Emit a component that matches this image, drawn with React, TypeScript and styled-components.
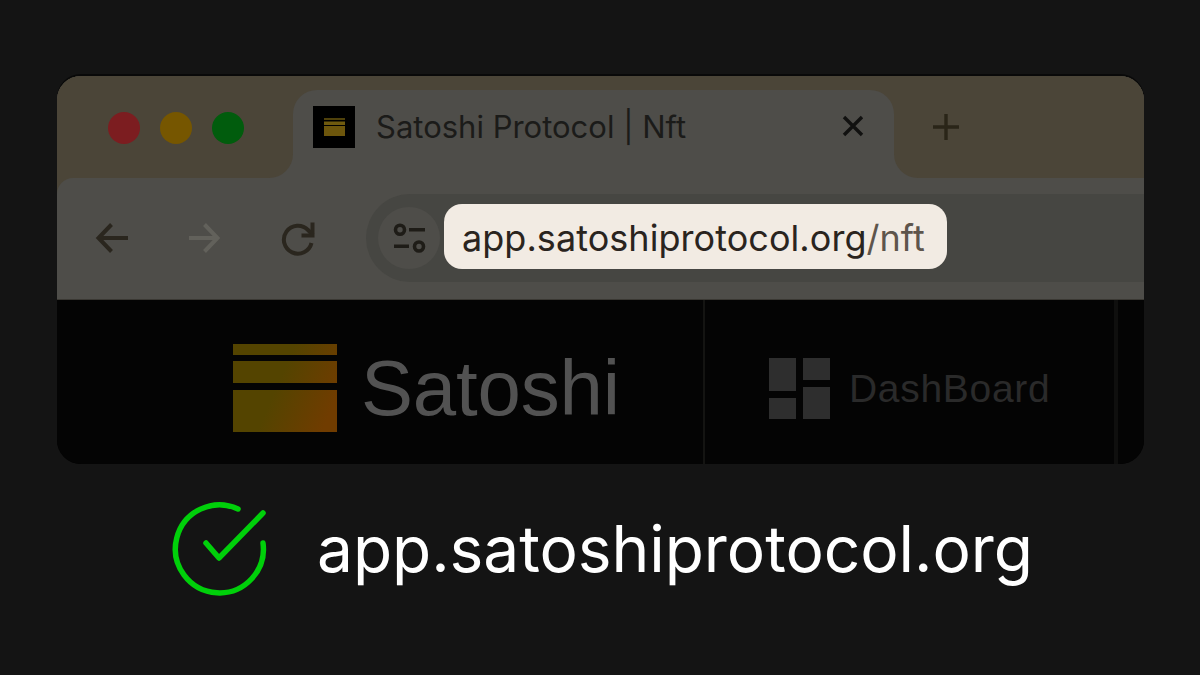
import styled, { createGlobalStyle } from 'styled-components';

const GlobalStyle = createGlobalStyle`
	html, body {
		margin: 0;
		padding: 0;
		background: #141414;
	}
	body {
		width: 1200px;
		height: 675px;
		overflow: hidden;
		font-family: Inter, "Liberation Sans", sans-serif;
	}
`;

const App = () => (
	<>
		<GlobalStyle />
		<Page>
			<BrowserCard>
				<Chrome>
					<TabStrip>
						<LeftPane>
							<Light $color="#7c1d20" />
							<Light $color="#765600" />
							<Light $color="#015c0d" />
						</LeftPane>
						<TabSlot>
							<Tab>
								<Favicon>
									<svg width="21" height="18" viewBox="0 0 21 18">
										<rect x="0" y="0" width="21" height="2" fill="#4f410b" />
										<rect x="0" y="3.5" width="21" height="3.5" fill="#6f5a0e" />
										<rect x="0" y="8" width="21" height="10" fill="#6d560c" />
									</svg>
								</Favicon>
								<TabTitle>Satoshi Protocol | Nft</TabTitle>
								<CloseIcon width="24" height="24" viewBox="0 0 24 24">
									<path d="M3 3 L21 21 M21 3 L3 21" />
								</CloseIcon>
							</Tab>
						</TabSlot>
						<RightPane>
							<PlusIcon width="28" height="28" viewBox="0 0 28 28">
								<path d="M14 1 V27 M1 14 H27" />
							</PlusIcon>
						</RightPane>
					</TabStrip>
					<Toolbar>
						<NavIcon $color="#2a261e" width="36" height="36" viewBox="0 0 36 36">
							<path d="M34 18 H5 M17.5 4.5 L4.5 18 L17.5 31.5" />
						</NavIcon>
						<NavIcon $color="#62615b" width="36" height="36" viewBox="0 0 36 36">
							<path d="M2 18 H31 M17.5 4.5 L30.5 18 L17.5 31.5" />
						</NavIcon>
						<NavIcon $color="#2a261e" width="36" height="36" viewBox="0 0 36 36">
							<path d="M31.5 23 A14 14 0 1 1 28 10 L33 15" />
							<path d="M32.5 2.5 V15.5 H21.5" />
						</NavIcon>
						<Omnibox>
							<SiteButton>
								<SlidersIcon width="34" height="32" viewBox="0 0 34 32">
									<circle cx="8" cy="7.7" r="4.5" />
									<path d="M17 7.7 H33" />
									<path d="M2 24.3 H17" />
									<circle cx="27" cy="24.5" r="4.5" />
								</SlidersIcon>
							</SiteButton>
							<UrlHighlight>
								<UrlHost>app.satoshiprotocol.org</UrlHost>
								<UrlPath>/nft</UrlPath>
							</UrlHighlight>
						</Omnibox>
					</Toolbar>
				</Chrome>
				<SiteHeader>
					<LogoCell>
						<svg width="104" height="88" viewBox="0 0 104 88">
							<defs>
								<linearGradient id="logoFill" x1="0.45" y1="0.4" x2="1" y2="0.6">
									<stop offset="0" stopColor="#544400" />
									<stop offset="1" stopColor="#703c00" />
								</linearGradient>
							</defs>
							<path d="M0 0 H104 V11 H0 Z M0 17 H104 V39 H0 Z M0 46 H104 V88 H0 Z" fill="url(#logoFill)" />
						</svg>
						<LogoText>Satoshi</LogoText>
					</LogoCell>
					<NavCell>
						<svg width="61" height="61" viewBox="0 0 61 61" fill="#2e2e2e">
							<rect x="0" y="0" width="27" height="33" />
							<rect x="34" y="0" width="27" height="22" />
							<rect x="0" y="40" width="27" height="21" />
							<rect x="34" y="29" width="27" height="32" />
						</svg>
						<NavText>DashBoard</NavText>
					</NavCell>
					<TrailingCell />
				</SiteHeader>
			</BrowserCard>
			<Footer>
				<svg width="98" height="98" viewBox="0 0 98 98" fill="none" stroke="#00d00a" strokeWidth="5.5" strokeLinecap="round" strokeLinejoin="round">
					<path d="M67 9 A44 44 0 1 0 92 43" />
					<path d="M35 43 L48 58 L92 13" />
				</svg>
				<FooterUrl>app.satoshiprotocol.org</FooterUrl>
			</Footer>
		</Page>
	</>
);

export default App;

const Page = styled.div`
	display: flex;
	flex-direction: column;
	padding: 76px 56px 0 57px;
`;

const BrowserCard = styled.div`
	display: flex;
	flex-direction: column;
	height: 388px;
	border-radius: 24px;
	overflow: hidden;
	background: #040404;
	box-shadow: 0 -2px 0 #090909;
`;

const Chrome = styled.div`
	display: flex;
	flex-direction: column;
	background: #4b4538;
`;

const TabStrip = styled.div`
	display: flex;
	height: 102px;
	background: #4e4d49;
`;

const LeftPane = styled.div`
	display: flex;
	align-items: center;
	gap: 20px;
	width: 236px;
	padding-left: 51px;
	padding-top: 2px;
	box-sizing: border-box;
	background: #4b4538;
	border-bottom-right-radius: 24px;
`;

const Light = styled.span<{ $color: string }>`
	width: 32px;
	height: 32px;
	border-radius: 50%;
	background: ${({ $color }) => $color};
`;

const TabSlot = styled.div`
	display: flex;
	width: 601px;
	padding-top: 14px;
	box-sizing: border-box;
	background: #4b4538;
`;

const Tab = styled.div`
	display: flex;
	flex: 1;
	align-items: flex-start;
	padding: 16px 29px 0 20px;
	background: #4e4d49;
	border-radius: 24px 24px 0 0;
`;

const Favicon = styled.div`
	display: flex;
	align-items: center;
	justify-content: center;
	width: 42px;
	height: 42px;
	background: #000;
`;

const TabTitle = styled.div`
	flex: 1;
	margin-left: 21px;
	font-size: 31px;
	line-height: 42px;
	color: #1b1b19;
	white-space: nowrap;
`;

const CloseIcon = styled.svg`
	margin-top: 8px;
	fill: none;
	stroke: #111110;
	stroke-width: 3.4;
`;

const RightPane = styled.div`
	flex: 1;
	padding: 37px 0 0 38px;
	background: #4b4538;
	border-bottom-left-radius: 24px;
`;

const PlusIcon = styled.svg`
	display: block;
	fill: none;
	stroke: #2a2518;
	stroke-width: 3.4;
`;

const Toolbar = styled.div`
	display: flex;
	align-items: center;
	height: 120px;
	padding: 0 0 1px 37px;
	background: #4e4d49;
	border-top-left-radius: 16px;
	border-bottom: 1px solid #3a3833;
`;

const NavIcon = styled.svg<{ $color: string }>`
	flex: none;
	margin-right: 57px;
	fill: none;
	stroke: ${({ $color }) => $color};
	stroke-width: 4;
`;

const Omnibox = styled.div`
	display: flex;
	flex: 1;
	align-items: center;
	height: 88px;
	margin-left: -7px;
	padding-left: 12px;
	background: #464642;
	border-radius: 44px 0 0 44px;
`;

const SiteButton = styled.div`
	display: flex;
	align-items: center;
	justify-content: center;
	width: 62px;
	height: 62px;
	border-radius: 50%;
	background: #4e4d49;
`;

const SlidersIcon = styled.svg`
	fill: none;
	stroke: #1e1c17;
	stroke-width: 3.6;
`;

const UrlHighlight = styled.div`
	display: flex;
	align-items: center;
	height: 65px;
	margin: 0 0 3px 4px;
	padding: 2px 22px 0 18px;
	box-sizing: border-box;
	border-radius: 18px;
	background: #f2ebe3;
	font-size: 36px;
	letter-spacing: 0.05px;
	white-space: nowrap;
`;

const UrlHost = styled.span`
	color: #2a241e;
`;

const UrlPath = styled.span`
	color: #5e554c;
`;

const SiteHeader = styled.div`
	display: flex;
	flex: 1;
	background: #040404;
`;

const LogoCell = styled.div`
	display: flex;
	align-items: center;
	width: 648px;
	padding: 12px 0 0 176px;
	box-sizing: border-box;
	border-right: 2px solid #141412;
`;

const LogoText = styled.div`
	margin-left: 24px;
	font-family: "Liberation Sans", Arial, sans-serif;
	font-size: 78px;
	line-height: 1;
	letter-spacing: -0.2px;
	color: #525252;
`;

const NavCell = styled.div`
	display: flex;
	align-items: center;
	width: 413px;
	padding: 12px 0 0 64px;
	box-sizing: border-box;
	border-right: 4px solid #0f0f0e;
`;

const NavText = styled.div`
	margin-left: 19px;
	font-family: "Liberation Sans", Arial, sans-serif;
	font-size: 39px;
	line-height: 1;
	letter-spacing: 0.7px;
	color: #2a2a2a;
`;

const TrailingCell = styled.div`
	flex: 1;
`;

const Footer = styled.div`
	display: flex;
	align-items: center;
	gap: 48px;
	margin-top: 36px;
	padding-left: 114px;
`;

const FooterUrl = styled.div`
	font-size: 64px;
	line-height: 98px;
	letter-spacing: -0.05px;
	color: #fff;
	white-space: nowrap;
`;
